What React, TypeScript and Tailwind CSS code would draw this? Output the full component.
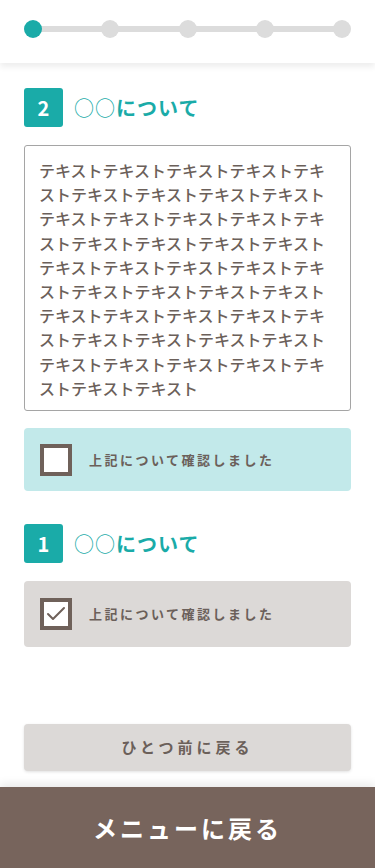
import { Check } from 'lucide-react';

const steps = [0, 1, 2, 3, 4];

const body = 'テキスト'.repeat(43);

function SectionTitle({ num }: { num: string }) {
  return (
    <div className="flex items-center gap-[11px]">
      <div className="flex h-[39px] w-[39px] items-center justify-center rounded-[3px] bg-[#1aaba8] text-[20px] font-bold text-white">
        {num}
      </div>
      <h2 className="text-[20px] font-bold tracking-[1px] text-[#1aaba8]">
        <span className="font-normal">○○</span>について
      </h2>
    </div>
  );
}

function ConfirmBox({ checked }: { checked: boolean }) {
  return (
    <label
      className={
        'flex items-center gap-[17px] rounded-[4px] px-4 ' +
        (checked ? 'h-[66px] bg-[#dcd9d7]' : 'h-[63px] bg-[#c2e9ea]')
      }
    >
      <span className="flex h-[32px] w-[32px] shrink-0 items-center justify-center border-[4px] border-[#6f615a] bg-white">
        {checked && <Check className="h-6 w-6 text-[#6f615a]" strokeWidth={2} />}
      </span>
      <span className="text-[13px] font-bold tracking-[2.5px] text-[#6b605a]">上記について確認しました</span>
    </label>
  );
}

export default function App() {
  return (
    <div
      className="flex h-[868px] flex-col bg-white"
      style={{ fontFamily: '"Noto Sans CJK JP", "Noto Sans", sans-serif' }}
    >
      {/* Progress */}
      <div className="relative z-10 h-[63px] bg-white px-6 shadow-[0_4px_6px_rgba(0,0,0,0.07)]">
        <div className="relative pt-5">
          <div className="absolute left-[9px] right-[9px] top-[26px] h-[6px] bg-[#dcdcdc]" />
          <div className="relative flex justify-between">
            {steps.map((s) => (
              <span
                key={s}
                className={'h-[18px] w-[18px] rounded-full ' + (s === 0 ? 'bg-[#1aaba8]' : 'bg-[#dcdcdc]')}
              />
            ))}
          </div>
        </div>
      </div>

      {/* Content */}
      <main className="flex flex-1 flex-col px-6 pt-[25px] pb-4">
        <SectionTitle num="2" />
        <div className="mt-[18px] h-[266px] rounded-[3px] border border-[#a5a5a5] px-[14px] py-[12px] text-[16px] leading-[24.2px] font-medium break-all text-[#6b605a]">
          {body}
        </div>
        <div className="mt-[17px]">
          <ConfirmBox checked={false} />
        </div>

        <div className="mt-[33px]">
          <SectionTitle num="1" />
        </div>
        <div className="mt-[18px]">
          <ConfirmBox checked={true} />
        </div>

        <button className="mt-auto h-[47px] rounded-[4px] bg-[#dcd9d7] text-[15px] font-bold tracking-[4px] text-[#6b605a] shadow-[0_1px_3px_rgba(0,0,0,0.12)]">
          ひとつ前に戻る
        </button>
      </main>

      {/* Bottom bar */}
      <footer className="flex h-[81px] items-center justify-center bg-[#77645c] shadow-[0_-4px_8px_rgba(0,0,0,0.08)]">
        <span className="text-[24px] font-bold tracking-[3px] text-white">メニューに戻る</span>
      </footer>
    </div>
  );
}
